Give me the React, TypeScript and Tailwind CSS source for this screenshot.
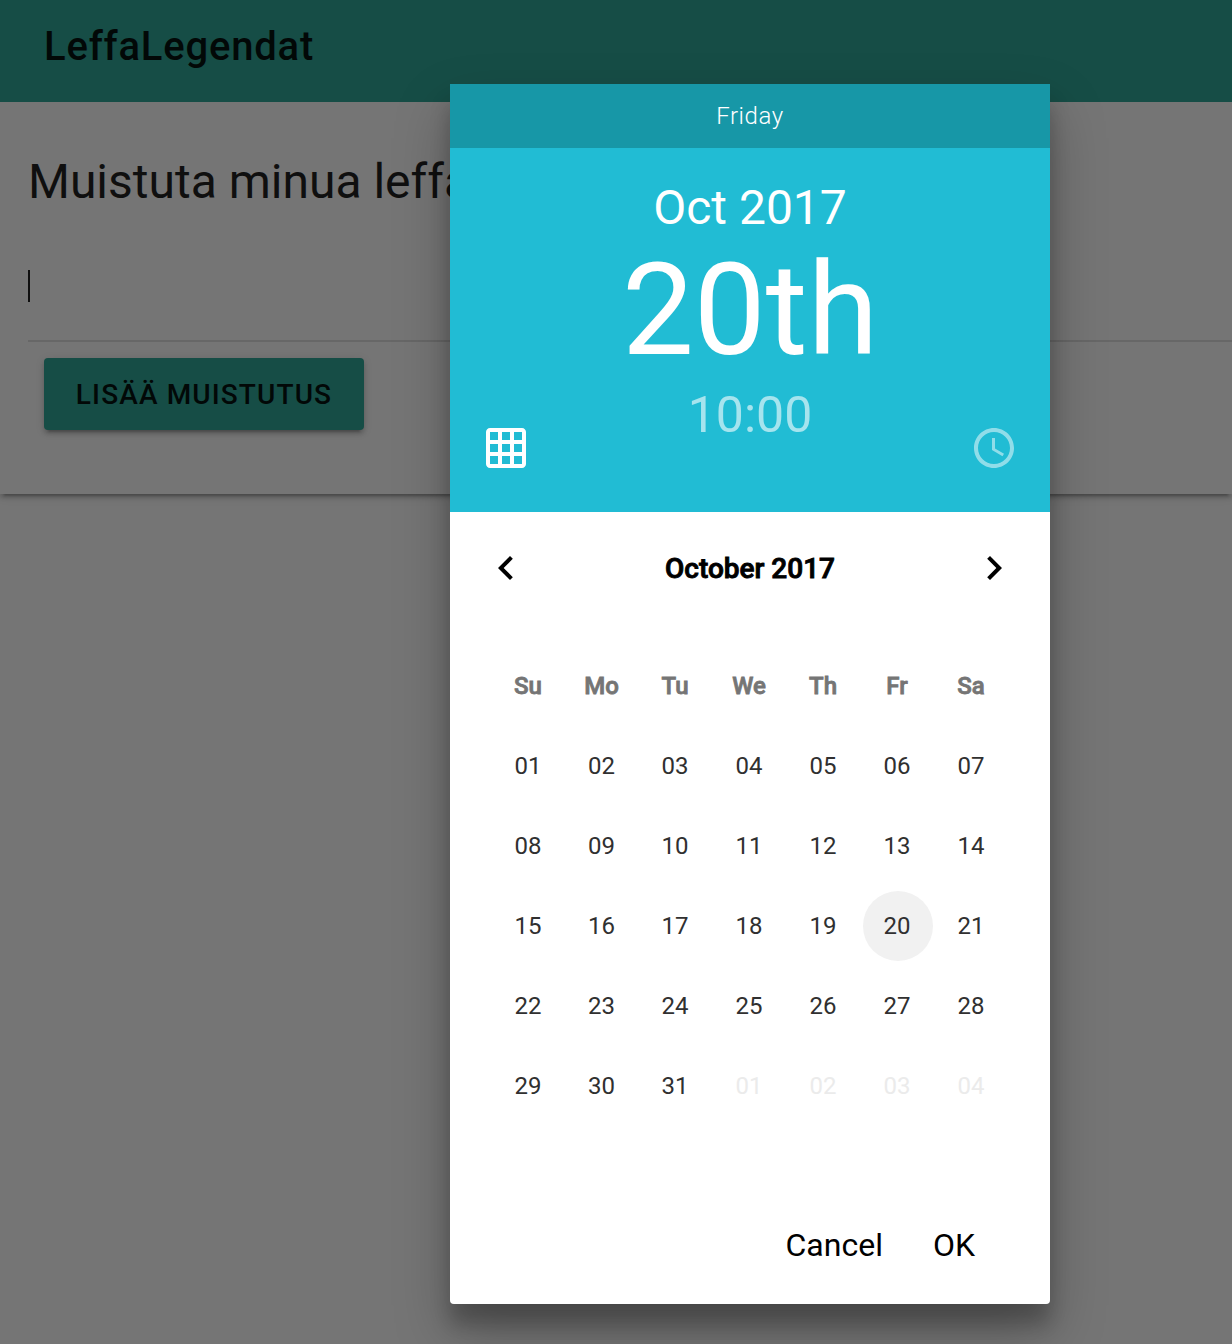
import React from "react";

const weekdays = ["Su", "Mo", "Tu", "We", "Th", "Fr", "Sa"];
const pad = (n: number) => String(n).padStart(2, "0");
const days = Array.from({ length: 35 }, (_, i) =>
  i < 31 ? { label: pad(i + 1), outside: false } : { label: pad(i - 30), outside: true }
);

function GridIcon() {
  return (
    <svg viewBox="0 0 24 24" className="size-12 fill-white">
      <path d="M20 2H4c-1.1 0-2 .9-2 2v16c0 1.1.9 2 2 2h16c1.1 0 2-.9 2-2V4c0-1.1-.9-2-2-2zM8 20H4v-4h4v4zm0-6H4v-4h4v4zm0-6H4V4h4v4zm6 12h-4v-4h4v4zm0-6h-4v-4h4v4zm0-6h-4V4h4v4zm6 12h-4v-4h4v4zm0-6h-4v-4h4v4zm0-6h-4V4h4v4z" />
    </svg>
  );
}

function ClockIcon() {
  return (
    <svg viewBox="0 0 24 24" className="size-12 fill-white opacity-50">
      <path d="M11.99 2C6.47 2 2 6.48 2 12s4.47 10 9.99 10C17.52 22 22 17.52 22 12S17.52 2 11.99 2zM12 20c-4.42 0-8-3.58-8-8s3.58-8 8-8 8 3.58 8 8-3.58 8-8 8z" />
      <path d="M12.5 7H11v6l5.25 3.15.75-1.23-4.5-2.67z" />
    </svg>
  );
}

function Chevron({ d }: { d: string }) {
  return (
    <button className="size-12">
      <svg viewBox="0 0 24 24" className="size-12 fill-black">
        <path d={d} />
      </svg>
    </button>
  );
}

function ReminderPage() {
  return (
    <div className="h-[1344px] bg-[#757575]">
      <header className="flex h-[102px] items-start bg-[#164d46] pl-[44px] pt-[23px]">
        <h1 className="text-[40px] leading-[48px] font-medium tracking-[0.8px] text-[#020807]">LeffaLegendat</h1>
      </header>
      <section className="flex h-[392px] flex-col items-start bg-[#757575] pl-7 pt-[52px] shadow-[0_4px_4px_rgba(0,0,0,0.14),0_6px_2px_-4px_rgba(0,0,0,0.2),0_2px_10px_rgba(0,0,0,0.12)] [clip-path:inset(0_0_-16px_0)]">
        <h2 className="text-[48px] leading-[56px] whitespace-nowrap text-[#0f0f0f]">Muistuta minua leffasta</h2>
        <div className="mt-[60px] h-[72px] w-full border-b-2 border-[#676767]">
          <div className="h-8 w-0.5 bg-[#0f0f0f]" />
        </div>
        <button className="mt-4 ml-4 h-[72px] w-[320px] rounded-[4px] bg-[#164d46] pt-[2px] text-[28px] font-medium tracking-[1.12px] text-[#020807] shadow-[0_4px_4px_rgba(0,0,0,0.14),0_6px_2px_-4px_rgba(0,0,0,0.2),0_2px_10px_rgba(0,0,0,0.12)]">
          LISÄÄ MUISTUTUS
        </button>
      </section>
    </div>
  );
}

function DateTimePicker() {
  return (
    <div className="flex h-[1220px] w-[600px] flex-col overflow-hidden rounded-b-[4px] bg-white text-center">
      <div className="h-16 bg-[#1797a7] text-[24px] leading-16 font-light tracking-[0.6px] text-white">Friday</div>
      <div className="flex h-[364px] flex-col items-center bg-[#21bcd4] pt-[32px] text-white">
        <div className="text-[48px] leading-[56px]">Oct 2017</div>
        <div className="mt-[6px] text-[128px] leading-[136px]">20th</div>
        <div className="mt-[9px] text-[50px] leading-[56px] text-white/60">10:00</div>
        <div className="-mt-[19px] flex w-full justify-between px-8">
          <button><GridIcon /></button>
          <button><ClockIcon /></button>
        </div>
      </div>
      <div className="flex h-28 items-center justify-between px-8">
        <Chevron d="M15.41 7.41L14 6l-6 6 6 6 1.41-1.41L10.83 12z" />
        <span className="pt-[2px] text-[28px] font-medium text-black [-webkit-text-stroke:0.9px_black]">October 2017</span>
        <Chevron d="M10 6L8.59 7.41 13.17 12l-4.58 4.58L10 18l6-6z" />
      </div>
      <div className="mt-[22px] ml-[41px] grid w-[517px] grid-cols-[74px_73px_repeat(5,74px)] auto-rows-[80px] text-[24px] leading-[80px] tracking-[0.1px]">
        {weekdays.map((d) => (
          <div key={d} className="font-medium tracking-normal text-[#757575] [-webkit-text-stroke:0.8px_#757575]">{d}</div>
        ))}
        {days.map((d, i) => (
          <div key={i} className="flex items-center justify-center">
            <span
              className={
                d.label === "20"
                  ? "-mr-[2px] size-[70px] rounded-full bg-[#f1f1f1] pr-[2px] leading-[70px] text-[#303030]"
                  : d.outside
                    ? "text-[#ebebeb]"
                    : "text-[#303030]"
              }
            >
              {d.label}
            </span>
          </div>
        ))}
      </div>
      <div className="mt-[95px] flex justify-end gap-[50px] pr-[75px] text-[32px] leading-[48px] text-black">
        <button>Cancel</button>
        <button>OK</button>
      </div>
    </div>
  );
}

export default function App() {
  return (
    <div className="relative h-[1344px] overflow-hidden font-['Roboto',sans-serif]">
      <ReminderPage />
      <div className="absolute inset-0 pt-[84px] pl-[450px]">
        <div className="w-[600px] rounded-b-[4px] shadow-[0_28px_56px_rgba(0,0,0,0.25),0_20px_20px_rgba(0,0,0,0.22)]">
          <DateTimePicker />
        </div>
      </div>
    </div>
  );
}
